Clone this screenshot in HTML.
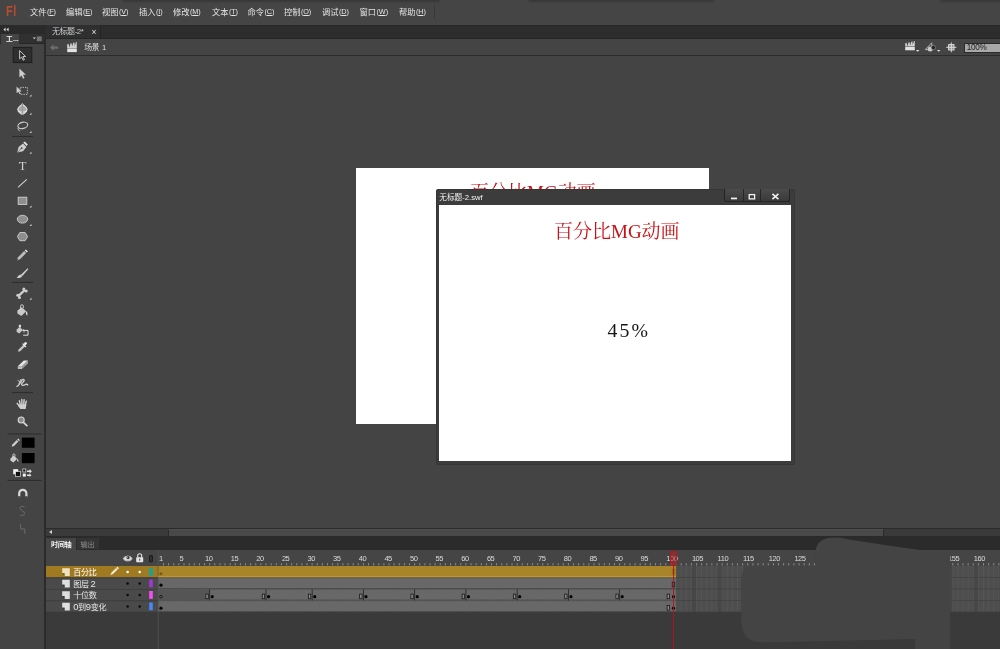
<!DOCTYPE html>
<html lang="zh-CN">
<head>
<meta charset="utf-8">
<title>无标题-2</title>
<style>
*{box-sizing:border-box;margin:0;padding:0}
html,body{width:1000px;height:649px;overflow:hidden;background:#444444}
body{position:relative;font-family:"Liberation Sans","Noto Sans CJK SC",sans-serif;color:#dcdcdc;font-size:9px;line-height:1}
.abs{position:absolute}
#app{position:absolute;left:0;top:0;width:1000px;height:649px;overflow:hidden;will-change:transform}
/* ---------- menu bar ---------- */
#menubar{left:0;top:0;width:1000px;height:25px;background:#454545}
#menubar .logo{left:5.6px;top:4px;font-size:14.2px;color:#b94a2c;letter-spacing:.6px;font-weight:700;transform:scaleX(.78);transform-origin:0 0}
#menubar .mi{top:7.6px;font-size:8.3px;color:#e4e4e4;white-space:nowrap;letter-spacing:-.15px}
#menubar .mi b{font-weight:400;font-size:7.3px;letter-spacing:-.1px;position:relative;top:-.3px;margin-left:.6px}
#menubar .mi u{text-decoration:underline;text-underline-offset:.8px;text-decoration-thickness:.7px}
#menubar .sep{left:434px;top:5px;width:1px;height:14px;background:#383838}
/* ---------- dark strip + doc tab ---------- */
#strip{left:0;top:25px;width:1000px;height:14px;background:#2d2d2d;border-top:1px solid #272727}
.smg{top:-3px;height:5px;background:#383838;border-radius:3px;filter:blur(.8px)}
#doctab{left:46px;top:25px;width:55px;height:13px;background:#2f2f2f;border-right:1px solid #232323}
#doctab span{position:absolute;left:6px;top:3px;font-size:8px;color:#c8ccd0;white-space:nowrap;letter-spacing:-.45px}
#doctab i{position:absolute;left:45.5px;top:2.6px;font-size:8.5px;color:#e0e0e0;font-style:normal;font-weight:400}
/* ---------- scene bar ---------- */
#strip2{left:46px;top:38px;width:954px;height:1px;background:#262626}
#scenebar{left:46px;top:39px;width:954px;height:17px;background:#444444;border-bottom:1.5px solid #2c2c2c}
#scenebar .txt{left:38.2px;top:5.4px;font-size:8px;color:#dcdcdc;white-space:nowrap;letter-spacing:-.8px}
#scenebar .txt b{font-weight:400;letter-spacing:0;margin-left:3.4px;font-size:7.6px}
#zoombox{left:917.5px;top:3.5px;width:40px;height:10px;background:#a8a8a8;border:1px solid #2a2a2a;border-right:none;color:#1c1c1c;font-size:8.2px;padding:.6px 0 0 2.2px;letter-spacing:-.3px}
/* ---------- tool panel ---------- */
#tools{left:0;top:25px;width:46px;height:624px;background:#444;border-right:2px solid #2b2b2b}
#tools .hdr{left:0;top:0;width:44px;height:8.5px;background:#2a2a2a}
#tools .tabrow{left:0;top:8.5px;width:44px;height:10.5px;background:#303030;border-bottom:1px solid #262626}
#tools .tab{left:1px;top:8.5px;width:18px;height:10.5px;background:#444;color:#f2f2f2;font-size:6.8px;font-weight:700;padding:2.2px 0 0 5px;white-space:nowrap;overflow:hidden;letter-spacing:.1px}
#tools .sepr{left:9px;width:15px;height:1px;background:#2e2e2e}
#tools .sel{left:13px;top:22px;width:19px;height:16px;background:#2e2e2e;border:1px solid #222}
/* ---------- stage ---------- */
#stage{left:356px;top:167.8px;width:352.5px;height:256.4px;background:#fff}
.redtitle{font-family:"Liberation Serif","Noto Serif CJK SC",serif;color:#cc0f14;font-size:19px;white-space:nowrap;line-height:1}
#swf{left:436px;top:189px;width:358.6px;height:275.6px;background:#3c3c3c;border-radius:2.5px;box-shadow:inset 0 0 0 .8px #353535}
#swf .title{left:3.2px;top:5px;font-size:7.7px;color:#f2f2f2;white-space:nowrap;letter-spacing:0;font-weight:400}
#swf .body{left:3px;top:15.6px;width:352.1px;height:256.3px;background:#fff}
#swf .btns{left:288px;top:0;width:66.4px;height:13.4px;background:linear-gradient(#4b4b4b,#3a3a3a);border:1px solid #242424;border-top:none;border-radius:0 0 2.5px 2.5px}
#swf .btns i{position:absolute;top:0;width:1px;height:12.4px;background:#262626}
#pct{left:168.4px;top:116px;font-family:"Liberation Serif",serif;font-size:19.8px;color:#161616;letter-spacing:2.15px;white-space:nowrap}
/* ---------- bottom: scrollbar + timeline ---------- */
#hscroll{left:46px;top:528px;width:954px;height:9px;background:#3a3a3a;border-top:1px solid #2a2a2a;border-bottom:1px solid #2a2a2a}
#hscroll .thumb{left:122px;top:0;width:716px;height:7px;background:#494949;border-left:1px solid #2a2a2a;border-right:1px solid #2a2a2a;border-top:1px solid #505050}
#hscroll .arr{left:3px;top:1px;width:0;height:0;border-top:2.6px solid transparent;border-bottom:2.6px solid transparent;border-right:3.4px solid #d0d0d0}
#tl{left:46px;top:537px;width:954px;height:112px;background:#3a3a3a}
#tl .tabs{left:0;top:0;width:954px;height:13px;background:#2b2b2b}
#tl .tab1{left:0;top:1px;width:30px;height:12px;background:#454545;color:#f0f0f0;font-size:7.2px;font-weight:700;padding:3px 0 0 5px;white-space:nowrap;letter-spacing:-.4px}
#tl .tab2{left:31px;top:1px;width:22px;height:11px;background:#343434;color:#8c8c8c;font-size:7.2px;padding:3px 0 0 3.6px;white-space:nowrap;letter-spacing:-.3px}
#tl .head{left:0;top:13px;width:954px;height:16px;background:#444}
.lrow{left:0;width:112px;height:11.5px;background:#4a4a4a;border-top:1px solid #3c3c3c}
.lrow .nm{position:absolute;left:26px;top:1px;font-size:9.2px;color:#e4e4e4;white-space:nowrap;letter-spacing:-.3px}
.frow{left:112.4px;width:517.6px;height:11.5px;background:#676767}
</style>
</head>
<body>
<div id="app">
<!-- ======== MENU BAR ======== -->
<div id="menubar" class="abs">
  <div class="abs logo">Fl</div>
  <div class="abs mi" style="left:30px">文件<b>(<u>F</u>)</b></div>
  <div class="abs mi" style="left:66px">编辑<b>(<u>E</u>)</b></div>
  <div class="abs mi" style="left:102px">视图<b>(<u>V</u>)</b></div>
  <div class="abs mi" style="left:139px">插入<b>(<u>I</u>)</b></div>
  <div class="abs mi" style="left:173px">修改<b>(<u>M</u>)</b></div>
  <div class="abs mi" style="left:212px">文本<b>(<u>T</u>)</b></div>
  <div class="abs mi" style="left:247.6px">命令<b>(<u>C</u>)</b></div>
  <div class="abs mi" style="left:284px">控制<b>(<u>O</u>)</b></div>
  <div class="abs mi" style="left:322px">调试<b>(<u>D</u>)</b></div>
  <div class="abs mi" style="left:359.6px">窗口<b>(<u>W</u>)</b></div>
  <div class="abs mi" style="left:399px">帮助<b>(<u>H</u>)</b></div>
  <div class="abs sep"></div>
</div>
<div class="abs smg" style="left:122px;width:318px"></div><div class="abs smg" style="left:528px;width:186px"></div><div class="abs smg" style="left:940px;width:70px"></div>
<!-- ======== STRIP / DOC TAB ======== -->
<div id="strip" class="abs"></div>
<div id="doctab" class="abs"><span>无标题-2*</span><i>×</i></div>
<div id="strip2" class="abs"></div>
<!-- ======== SCENE BAR ======== -->
<div id="scenebar" class="abs">
  <svg class="abs" style="left:0;top:0" width="954" height="16" viewBox="46 39 954 16">
    <path d="M50 47.600l3.600-3.400v2.200h4.400v2.400h-4.400v2.200z" fill="#6c6c6c"/>
    <path d="M67.200 48.400h9.600v3.700h-9.600z" fill="#e2e2e2"/><path d="M67.200 44.200l1.300-.4 1 3.600 .9-3.900 1.200-.3 .5 3.400 1.100-3.800 1.300-.3 .2 3.500 1.300-3.900.8-.2v6.100h-9.600z" fill="#cfcfcf"/>
    <path d="M905.200 47h9.600v3.300h-9.600z" fill="#e2e2e2"/><path d="M905.200 43.200l1.300-.4 1 3.400.9-3.700 1.200-.3.500 3.200 1.100-3.600 1.300-.3.200 3.300 1.300-3.700.8-.2v5.700h-9.600z" fill="#cfcfcf"/>
    <path d="M916 50h3.400l-1.700 1.700z" fill="#e6e6e6"/>
    <path d="M925.200 49.600l6.600-6.800v6.800z" fill="none" stroke="#bdbdbd" stroke-width=".9"/><circle cx="930.200" cy="49" r="2.500" fill="#c9c9c9"/><circle cx="933.400" cy="47.600" r="2.200" fill="#262626" stroke="#9a9a9a" stroke-width=".6"/>
    <path d="M937 50h3.400l-1.700 1.700z" fill="#e6e6e6"/>
    <rect x="948.600" y="44.600" width="5.400" height="5.400" fill="#8a8a8a" stroke="#e4e4e4" stroke-width=".9"/><path d="M951.300 42.400v9.800M946.200 47.300h10.200" stroke="#e4e4e4" stroke-width=".9"/>
  </svg>
  <div class="abs txt">场景<b>1</b></div>
  <div id="zoombox" class="abs">100%</div>
</div>
<!-- ======== STAGE ======== -->
<div id="stage" class="abs">
  <div class="abs redtitle" style="left:114px;top:15.2px">百分比MG动画</div>
</div>
<div id="swf" class="abs">
  <div class="abs title">无标题-2.swf</div>
  <div class="abs btns"><i style="left:17.6px"></i><i style="left:35px"></i>
    <svg class="abs" style="left:0;top:0" width="66" height="13" viewBox="724 188.400 66 13"><rect x="730" y="197" width="6" height="1.700" fill="#f4f4f4"/><rect x="748.200" y="194" width="5.400" height="4.300" fill="none" stroke="#f4f4f4" stroke-width="1.300"/><path d="M771.400 193.300l6 5.200M777.400 193.300l-6 5.200" stroke="#f4f4f4" stroke-width="1.500"/></svg>
  </div>
  <div class="abs body">
    <div class="abs redtitle" style="left:115px;top:17.4px">百分比MG动画</div>
    <div id="pct" class="abs">45%</div>
  </div>
</div>
<!-- ======== TOOL PANEL ======== -->
<div id="tools" class="abs">
  <div class="abs hdr"></div>
  <div class="abs tabrow"></div>
  <div class="abs tab">工...</div>
</div>
<!--TOOLS_START-->
<svg class="abs" style="left:0;top:0" width="46" height="649" viewBox="0 0 46 649">
<path d="M5.600 27.600l-2.200 2 2.200 2zM8.600 27.600l-2.200 2 2.200 2z" fill="#d6d6d6"/>
<path d="M32.8 37.6h3l-1.5 1.7z" fill="#d8d8d8"/><rect x="36.8" y="36.4" width="4.9" height="4.8" fill="#757575"/>
<rect x="13.2" y="47.4" width="18.6" height="15.2" fill="#2f2f2f" stroke="#1f1f1f" stroke-width="1"/>
<path d="M19.6 50.6v8.2l2-1.8 1.5 3.2 1.3-.6-1.5-3.1h2.7z" fill="#2a2a2a" stroke="#d6d6d6" stroke-width="0.9" stroke-linejoin="round"/>
<path d="M19.4 68.4v9l2.1-2 1.5 3.3 1.5-.7-1.5-3.2h2.9z" fill="#cdcdcd"/>
<path d="M16.6 86.6v6.6l1.7-1.5 1.1 2.3 1-.5-1.1-2.2h2z" fill="#cfcfcf"/>
<rect x="20.2" y="87.4" width="7.2" height="7" fill="none" stroke="#bdbdbd" stroke-width="1" stroke-dasharray="1.3 1.1"/>
<circle cx="22.400" cy="109.600" r="4.500" fill="#a8a8a8" stroke="#d8d8d8" stroke-width=".9"/><path d="M22.400 103.400l4.800 5.800-4.800 5.800-4.800-5.800z" fill="none" stroke="#e2e2e2" stroke-width=".8"/><path d="M17.800 111c2.400 1.500 6.800 1.500 9.200 0" fill="none" stroke="#f0f0f0" stroke-width=".8"/><path d="M22.400 103.400v11.600" stroke="#8a8a8a" stroke-width=".6"/>
<ellipse cx="22.8" cy="125.4" rx="5" ry="3.1" fill="none" stroke="#cfcfcf" stroke-width="1.1" transform="rotate(-14 22.8 125.4)"/><path d="M18.6 127.6c-1.4 1 .2 2.6 1.2 3.6" fill="none" stroke="#cfcfcf" stroke-width="1"/>
<path d="M31.5 94.6v2h-2z" fill="#dcdcdc"/>
<path d="M31.5 112.7v2h-2z" fill="#dcdcdc"/>
<path d="M31.5 130.9v2h-2z" fill="#dcdcdc"/>
<path d="M31.5 151.70000000000002v2h-2z" fill="#dcdcdc"/>
<path d="M31.5 205.60000000000002v2h-2z" fill="#dcdcdc"/>
<path d="M31.5 223.9v2h-2z" fill="#dcdcdc"/>
<path d="M31.5 297.7v2h-2z" fill="#dcdcdc"/>
<rect x="12" y="135.9" width="21" height="1" fill="#2c2c2c"/>
<rect x="12" y="281.9" width="21" height="1" fill="#2c2c2c"/>
<rect x="12" y="392.1" width="21" height="1" fill="#2c2c2c"/>
<rect x="7.5" y="433.4" width="34.0" height="1" fill="#2c2c2c"/>
<rect x="7.5" y="479.9" width="34.0" height="1" fill="#2c2c2c"/>
<path d="M17.2 152.6l1.4-5.6 4.4-3.4 3.4 3.4-3.4 4.2z" fill="#cdcdcd"/><path d="M23.2 142.6l1.6-1.2 3 3-1.2 1.6z" fill="#e2e2e2"/><circle cx="21.6" cy="148.2" r="0.9" fill="#444"/><path d="M17.4 152.4l3.8-3.8" stroke="#444" stroke-width=".6"/>
<text x="22.6" y="169.8" font-family="'Liberation Serif',serif" font-size="12.5" fill="#d2d2d2" text-anchor="middle">T</text>
<path d="M18 187.4l8.8-8" stroke="#cfcfcf" stroke-width="1.1"/>
<rect x="18.2" y="197.2" width="8.6" height="7.2" fill="#8e8e8e" stroke="#d0d0d0" stroke-width="0.9"/>
<ellipse cx="22.5" cy="219.2" rx="5.2" ry="3.9" fill="#8e8e8e" stroke="#d0d0d0" stroke-width="0.9"/>
<path d="M17.4 236.6l2.5-4.1h5.2l2.5 4.1-2.5 4.1h-5.2z" fill="#8e8e8e" stroke="#d0d0d0" stroke-width="0.9"/>
<path d="M16.8 260.4l1.2-3.2 6.2-6.2 2 2-6.2 6.2z" fill="#bdbdbd"/><path d="M24.8 250.4l1-1 2 2-1 1z" fill="#ededed"/><path d="M16.8 260.4l.6-1.6 1 1z" fill="#555"/>
<path d="M27.6 268.2l.8.7-6 7-1.4-1.2z" fill="#d2d2d2"/><path d="M16.6 277.4c1.6-.4 2.2-2.6 4-2.8l1.6 1.4c-.8 2-3.4 2.4-5.6 1.400z" fill="#d2d2d2"/>
<path d="M18 296.400l6.800-6.400" stroke="#cfcfcf" stroke-width="2.400"/><circle cx="17.800" cy="295.200" r="1.500" fill="#cfcfcf"/><circle cx="19.500" cy="297.500" r="1.500" fill="#cfcfcf"/><circle cx="23.800" cy="289" r="1.500" fill="#cfcfcf"/><circle cx="26.200" cy="291" r="1.500" fill="#cfcfcf"/>
<path d="M17.400 310.600l4.400-3.400 4.400 4-4.800 4.800-4-2.600z" fill="#c9c9c9"/><path d="M20.600 309.400v-3.200a1.400 1.400 0 0 1 2.800 0v2" fill="none" stroke="#d8d8d8" stroke-width=".9"/><path d="M26.200 311.200c1.200.4 1.400 2.400 1 4.600-1-.8-1.600-2.600-1-4.600z" fill="#e6e6e6"/>
<path d="M16.600 329.400l3.200-2.400 3 3-3.600 3.400-2.600-1.600z" fill="#c9c9c9"/><path d="M18.800 327.400v-2.600h2.200v2.600z" fill="#dcdcdc"/><path d="M22.400 330.400h5.600v4.800h-4.800" fill="none" stroke="#e0e0e0" stroke-width="1"/><path d="M23.200 329.200c.8.400 1 1.800.8 3.400" stroke="#e6e6e6" stroke-width=".8" fill="none"/>
<path d="M18 351.800l.6-2.200 5-5 1.600 1.600-5 5z" fill="#c4c4c4"/><path d="M23.400 344l1.600-1.800c.8-.8 2.600 1 1.800 1.800l-1.800 1.600z" fill="#ececec"/><path d="M22.600 343.600l3.400 3.400" stroke="#ececec" stroke-width="1.100"/>
<path d="M17.800 366.200l6-5.600h4.200l-6 5.600z" fill="#e4e4e4"/><path d="M17.800 366.200h4.200v2.800h-4.200z" fill="#bcbcbc"/><path d="M22 366.200l6-5.600v2.800l-6 5.600z" fill="#9c9c9c"/>
<path d="M16.400 386.600c2.600-.6 3.400-3 4.800-5.400 1-1.800 2.600-2.400 3-1 .4 1.600-2.400 2.400-2.600 4-.2 1.600 2.400 1.400 3.400.6 1.200-1 2.400-.6 3 .6" fill="none" stroke="#cfcfcf" stroke-width="1.350"/><path d="M17.600 380.200l4 3M21 379l-2.400 5.400" stroke="#cfcfcf" stroke-width=".9"/>
<path d="M19.400 400.600l1 4.600M21.800 399.400l.2 5.600M24.100 399.700l-.4 5.400M26.300 401.200l-1.200 4.400M17.200 403.300l2.600 3.500" stroke="#d4d4d4" stroke-width="1.400" stroke-linecap="round" fill="none"/><path d="M18.900 404.600h7.600l-.9 4.500h-5.200l-1.800-2.500z" fill="#cfcfcf"/>
<circle cx="21.200" cy="420" r="3" fill="#8a8a8a" stroke="#d6d6d6" stroke-width="1.100"/><path d="M23.400 422.400l4 3.800" stroke="#d6d6d6" stroke-width="1.700"/>
<path d="M11.600 446.800l.8-2.400 4.400-4.400 1.600 1.600-4.400 4.400z" fill="#d0d0d0"/><path d="M17.400 439.400l.8-.8 1.600 1.600-.8.800z" fill="#f2f2f2"/>
<rect x="21.900" y="437.600" width="12.700" height="10.200" fill="#000"/>
<path d="M10.400 458.400l3.400-2.800 3.400 3.200-3.800 3.600-3-2z" fill="#cdcdcd"/><path d="M12.800 457.400v-2.400a1.100 1.100 0 0 1 2.200 0v1.600" fill="none" stroke="#d8d8d8" stroke-width=".8"/><path d="M17.400 458.800c1 .4 1.200 1.800.8 3.400-.8-.6-1.200-2-.8-3.400z" fill="#e6e6e6"/>
<rect x="21.900" y="453" width="12.700" height="10.200" fill="#000"/>
<rect x="13.200" y="469.200" width="5" height="5" fill="#f4f4f4"/><rect x="15.600" y="471.600" width="5" height="5" fill="#111" stroke="#e0e0e0" stroke-width=".7"/>
<rect x="22.800" y="469" width="3" height="3" fill="#111" stroke="#e4e4e4" stroke-width=".7"/><rect x="22.800" y="473.600" width="3" height="3" fill="#f2f2f2"/><path d="M27 470.400h2.600v-1.400l2.200 2.200-2.200 2.200v-1.400h-2.600zM27 474.400h2.600v-1l1.800 1.800-1.800 1.800v-1h-2.600z" fill="#e2e2e2"/>
<path d="M19.200 497v-3.600a3.600 3.600 0 0 1 7.200 0v3.600" fill="none" stroke="#d8d8d8" stroke-width="2.200"/><rect x="18.100" y="496" width="2.200" height="1.800" fill="#555"/><rect x="25.300" y="496" width="2.200" height="1.800" fill="#555"/>
<path d="M24.600 507c-2-1.400-4.600-.6-4.600 1.400 0 2.400 4.600 2.400 4.600 5 0 2-2.800 3-4.800 1.600" fill="none" stroke="#6a6a6a" stroke-width="1"/>
<path d="M20.600 524v5h4.200v5" fill="none" stroke="#6a6a6a" stroke-width="1"/>
</svg>
<!--TOOLS_END-->
<!-- ======== H SCROLL ======== -->
<div id="hscroll" class="abs"><div class="abs arr"></div><div class="abs thumb"></div></div>
<!-- ======== TIMELINE ======== -->
<div id="tl" class="abs">
  <div class="abs tabs"></div>
  <div class="abs tab1">时间轴</div>
  <div class="abs tab2">输出</div>
</div>
<!--TL_START-->
<svg class="abs" style="left:0;top:537px" width="1000" height="112" viewBox="0 537 1000 112" font-family="'Liberation Sans','Noto Sans CJK SC',sans-serif">
<rect x="46" y="550" width="954" height="16" fill="#454545"/>
<rect x="46" y="612" width="954" height="37" fill="#3a3a3a"/>
<rect x="46" y="566" width="112" height="11.5" fill="#a07a20"/>
<path d="M62.2 568.3h7.6v7.8h-5.2v-3h-2.4z" fill="#efe2c0"/>
<path d="M62.4 573.6h2v2.4z" fill="#6b5216"/>
<text x="73.2" y="575.1" font-size="8.1" fill="#ffffff" letter-spacing="-0.35">百分比</text>
<circle cx="127.6" cy="571.9" r="1.25" fill="#ffffff"/><circle cx="139.7" cy="571.9" r="1.25" fill="#ffffff"/>
<rect x="149.2" y="568" width="3.6" height="7.8" fill="#13a39c"/>
<rect x="46" y="577.5" width="112" height="11.5" fill="#4a4a4a"/>
<rect x="46" y="577.5" width="112" height="0.8" fill="#3d3d3d"/>
<path d="M62.2 579.8h7.6v7.8h-5.2v-3h-2.4z" fill="#dedede"/>
<path d="M62.4 585.1h2v2.4z" fill="#333"/>
<text x="73.2" y="586.6" font-size="8.1" fill="#e6e6e6" letter-spacing="-0.35">图层 <tspan font-size="9.400">2</tspan></text>
<circle cx="127.6" cy="583.4" r="1.25" fill="#0a0a0a"/><circle cx="139.7" cy="583.4" r="1.25" fill="#0a0a0a"/>
<rect x="149.2" y="579.5" width="3.6" height="7.8" fill="#a435d6"/>
<rect x="46" y="589" width="112" height="11.5" fill="#4a4a4a"/>
<rect x="46" y="589" width="112" height="0.8" fill="#3d3d3d"/>
<path d="M62.2 591.3h7.6v7.8h-5.2v-3h-2.4z" fill="#dedede"/>
<path d="M62.4 596.6h2v2.4z" fill="#333"/>
<text x="73.2" y="598.1" font-size="8.1" fill="#e6e6e6" letter-spacing="-0.35">十位数</text>
<circle cx="127.6" cy="594.9" r="1.25" fill="#0a0a0a"/><circle cx="139.7" cy="594.9" r="1.25" fill="#0a0a0a"/>
<rect x="149.2" y="591" width="3.6" height="7.8" fill="#f64cf6"/>
<rect x="46" y="600.5" width="112" height="11.5" fill="#4a4a4a"/>
<rect x="46" y="600.5" width="112" height="0.8" fill="#3d3d3d"/>
<path d="M62.2 602.8h7.6v7.8h-5.2v-3h-2.4z" fill="#dedede"/>
<path d="M62.4 608.1h2v2.4z" fill="#333"/>
<text x="73.2" y="609.6" font-size="8.1" fill="#e6e6e6" letter-spacing="-0.35"><tspan font-size="9.400">0</tspan>到<tspan font-size="9.400">9</tspan>变化</text>
<circle cx="127.6" cy="606.4" r="1.25" fill="#0a0a0a"/><circle cx="139.7" cy="606.4" r="1.25" fill="#0a0a0a"/>
<rect x="149.2" y="602.5" width="3.6" height="7.8" fill="#4a86f7"/>
<path d="M110.3 575.2l1.2-2.6 4.6-4.6 1.5 1.5-4.6 4.6z" fill="#f3ead0"/><path d="M116.4 567.6l1-.9 1.5 1.5-.9 1z" fill="#fff"/>
<rect x="46" y="611.6" width="112" height="0.8" fill="#3d3d3d"/>
<path d="M123.4 558.6c1.900-3.300 6.700-3.300 8.600 0c-1.900 3-6.700 3-8.600 0z" fill="#e9e9e9" stroke="#bcbcbc" stroke-width="1.100"/><circle cx="128" cy="557.700" r="1.600" fill="#3a3a3a"/><circle cx="127.400" cy="557.200" r=".5" fill="#e0e0e0"/>
<rect x="136.2" y="557.2" width="7" height="5" rx=".6" fill="#e6e6e6"/><path d="M137.7 557.4v-1.6a2 2 0 0 1 4 0v1.6" fill="none" stroke="#e6e6e6" stroke-width="1.1"/><rect x="139.2" y="558.7" width="1" height="2" fill="#444"/>
<rect x="149.6" y="555.6" width="2.8" height="6.2" rx=".5" fill="#333" stroke="#151515" stroke-width=".9"/>
<rect x="157.8" y="550" width="0.7" height="99" fill="#585858"/>
<text x="159.0" y="561" font-size="7.5" fill="#dcdcdc" letter-spacing="-0.45">1</text>
<text x="179.4" y="561" font-size="7.5" fill="#dcdcdc" letter-spacing="-0.45">5</text>
<text x="205.0" y="561" font-size="7.5" fill="#dcdcdc" letter-spacing="-0.45">10</text>
<text x="230.7" y="561" font-size="7.5" fill="#dcdcdc" letter-spacing="-0.45">15</text>
<text x="256.3" y="561" font-size="7.5" fill="#dcdcdc" letter-spacing="-0.45">20</text>
<text x="281.9" y="561" font-size="7.5" fill="#dcdcdc" letter-spacing="-0.45">25</text>
<text x="307.5" y="561" font-size="7.5" fill="#dcdcdc" letter-spacing="-0.45">30</text>
<text x="333.1" y="561" font-size="7.5" fill="#dcdcdc" letter-spacing="-0.45">35</text>
<text x="358.8" y="561" font-size="7.5" fill="#dcdcdc" letter-spacing="-0.45">40</text>
<text x="384.4" y="561" font-size="7.5" fill="#dcdcdc" letter-spacing="-0.45">45</text>
<text x="410.0" y="561" font-size="7.5" fill="#dcdcdc" letter-spacing="-0.45">50</text>
<text x="435.6" y="561" font-size="7.5" fill="#dcdcdc" letter-spacing="-0.45">55</text>
<text x="461.3" y="561" font-size="7.5" fill="#dcdcdc" letter-spacing="-0.45">60</text>
<text x="486.9" y="561" font-size="7.5" fill="#dcdcdc" letter-spacing="-0.45">65</text>
<text x="512.5" y="561" font-size="7.5" fill="#dcdcdc" letter-spacing="-0.45">70</text>
<text x="538.1" y="561" font-size="7.5" fill="#dcdcdc" letter-spacing="-0.45">75</text>
<text x="563.8" y="561" font-size="7.5" fill="#dcdcdc" letter-spacing="-0.45">80</text>
<text x="589.4" y="561" font-size="7.5" fill="#dcdcdc" letter-spacing="-0.45">85</text>
<text x="615.0" y="561" font-size="7.5" fill="#dcdcdc" letter-spacing="-0.45">90</text>
<text x="640.6" y="561" font-size="7.5" fill="#dcdcdc" letter-spacing="-0.45">95</text>
<text x="666.3" y="561" font-size="7.5" fill="#dcdcdc" letter-spacing="-0.45">100</text>
<text x="691.9" y="561" font-size="7.5" fill="#dcdcdc" letter-spacing="-0.45">105</text>
<text x="717.5" y="561" font-size="7.5" fill="#dcdcdc" letter-spacing="-0.45">110</text>
<text x="743.1" y="561" font-size="7.5" fill="#dcdcdc" letter-spacing="-0.45">115</text>
<text x="768.8" y="561" font-size="7.5" fill="#dcdcdc" letter-spacing="-0.45">120</text>
<text x="794.4" y="561" font-size="7.5" fill="#dcdcdc" letter-spacing="-0.45">125</text>
<text x="948.1" y="561" font-size="7.5" fill="#dcdcdc" letter-spacing="-0.45">155</text>
<text x="973.8" y="561" font-size="7.5" fill="#dcdcdc" letter-spacing="-0.45">160</text>
<text x="999.4" y="561" font-size="7.5" fill="#dcdcdc" letter-spacing="-0.45">165</text>
<path d="M163.53 563.2v2.2 M168.65 563.2v2.2 M173.78 563.2v2.2 M178.90 563.2v2.2 M184.03 563.2v2.2 M189.15 563.2v2.2 M194.28 563.2v2.2 M199.40 563.2v2.2 M204.53 563.2v2.2 M209.65 563.2v2.2 M214.78 563.2v2.2 M219.90 563.2v2.2 M225.03 563.2v2.2 M230.15 563.2v2.2 M235.28 563.2v2.2 M240.40 563.2v2.2 M245.53 563.2v2.2 M250.65 563.2v2.2 M255.78 563.2v2.2 M260.90 563.2v2.2 M266.02 563.2v2.2 M271.15 563.2v2.2 M276.27 563.2v2.2 M281.40 563.2v2.2 M286.52 563.2v2.2 M291.65 563.2v2.2 M296.77 563.2v2.2 M301.90 563.2v2.2 M307.02 563.2v2.2 M312.15 563.2v2.2 M317.27 563.2v2.2 M322.40 563.2v2.2 M327.52 563.2v2.2 M332.65 563.2v2.2 M337.77 563.2v2.2 M342.90 563.2v2.2 M348.02 563.2v2.2 M353.15 563.2v2.2 M358.27 563.2v2.2 M363.40 563.2v2.2 M368.52 563.2v2.2 M373.65 563.2v2.2 M378.77 563.2v2.2 M383.90 563.2v2.2 M389.02 563.2v2.2 M394.15 563.2v2.2 M399.27 563.2v2.2 M404.40 563.2v2.2 M409.52 563.2v2.2 M414.65 563.2v2.2 M419.77 563.2v2.2 M424.90 563.2v2.2 M430.02 563.2v2.2 M435.15 563.2v2.2 M440.27 563.2v2.2 M445.40 563.2v2.2 M450.52 563.2v2.2 M455.65 563.2v2.2 M460.77 563.2v2.2 M465.90 563.2v2.2 M471.02 563.2v2.2 M476.15 563.2v2.2 M481.27 563.2v2.2 M486.40 563.2v2.2 M491.52 563.2v2.2 M496.65 563.2v2.2 M501.77 563.2v2.2 M506.90 563.2v2.2 M512.02 563.2v2.2 M517.15 563.2v2.2 M522.27 563.2v2.2 M527.40 563.2v2.2 M532.52 563.2v2.2 M537.65 563.2v2.2 M542.77 563.2v2.2 M547.90 563.2v2.2 M553.02 563.2v2.2 M558.15 563.2v2.2 M563.27 563.2v2.2 M568.40 563.2v2.2 M573.52 563.2v2.2 M578.65 563.2v2.2 M583.77 563.2v2.2 M588.90 563.2v2.2 M594.02 563.2v2.2 M599.15 563.2v2.2 M604.27 563.2v2.2 M609.40 563.2v2.2 M614.52 563.2v2.2 M619.65 563.2v2.2 M624.77 563.2v2.2 M629.90 563.2v2.2 M635.02 563.2v2.2 M640.15 563.2v2.2 M645.27 563.2v2.2 M650.40 563.2v2.2 M655.52 563.2v2.2 M660.65 563.2v2.2 M665.77 563.2v2.2 M670.90 563.2v2.2 M676.02 563.2v2.2 M681.15 563.2v2.2 M686.27 563.2v2.2 M691.40 563.2v2.2 M696.52 563.2v2.2 M701.65 563.2v2.2 M706.77 563.2v2.2 M711.90 563.2v2.2 M717.02 563.2v2.2 M722.15 563.2v2.2 M727.27 563.2v2.2 M732.40 563.2v2.2 M737.52 563.2v2.2 M742.65 563.2v2.2 M747.77 563.2v2.2 M752.90 563.2v2.2 M758.02 563.2v2.2 M763.15 563.2v2.2 M768.27 563.2v2.2 M773.40 563.2v2.2 M778.52 563.2v2.2 M783.65 563.2v2.2 M788.77 563.2v2.2 M793.90 563.2v2.2 M799.02 563.2v2.2 M804.15 563.2v2.2 M809.27 563.2v2.2 M814.40 563.2v2.2 M819.52 563.2v2.2 M824.65 563.2v2.2 M829.77 563.2v2.2 M834.90 563.2v2.2 M840.02 563.2v2.2 M845.15 563.2v2.2 M850.27 563.2v2.2 M855.40 563.2v2.2 M860.52 563.2v2.2 M865.65 563.2v2.2 M870.77 563.2v2.2 M875.90 563.2v2.2 M881.02 563.2v2.2 M886.15 563.2v2.2 M891.27 563.2v2.2 M896.40 563.2v2.2 M901.52 563.2v2.2 M906.65 563.2v2.2 M911.77 563.2v2.2 M916.90 563.2v2.2 M922.02 563.2v2.2 M927.15 563.2v2.2 M932.27 563.2v2.2 M937.40 563.2v2.2 M942.52 563.2v2.2 M947.65 563.2v2.2 M952.77 563.2v2.2 M957.90 563.2v2.2 M963.02 563.2v2.2 M968.15 563.2v2.2 M973.27 563.2v2.2 M978.40 563.2v2.2 M983.52 563.2v2.2 M988.65 563.2v2.2 M993.77 563.2v2.2 M998.90 563.2v2.2 M1004.02 563.2v2.2" stroke="#959595" stroke-width="0.9" fill="none"/>
<rect x="676.02" y="566" width="323.98" height="46" fill="#4e4e4e"/>
<rect x="691.40" y="566" width="5.125" height="46" fill="#474747"/>
<rect x="717.02" y="566" width="5.125" height="46" fill="#474747"/>
<rect x="742.65" y="566" width="5.125" height="46" fill="#474747"/>
<rect x="768.27" y="566" width="5.125" height="46" fill="#474747"/>
<rect x="793.90" y="566" width="5.125" height="46" fill="#474747"/>
<rect x="819.52" y="566" width="5.125" height="46" fill="#474747"/>
<rect x="845.15" y="566" width="5.125" height="46" fill="#474747"/>
<rect x="870.77" y="566" width="5.125" height="46" fill="#474747"/>
<rect x="896.40" y="566" width="5.125" height="46" fill="#474747"/>
<rect x="922.02" y="566" width="5.125" height="46" fill="#474747"/>
<rect x="947.65" y="566" width="5.125" height="46" fill="#474747"/>
<rect x="973.27" y="566" width="5.125" height="46" fill="#474747"/>
<rect x="998.90" y="566" width="5.125" height="46" fill="#474747"/>
<path d="M676.02 566v46 M681.15 566v46 M686.27 566v46 M691.40 566v46 M696.52 566v46 M701.65 566v46 M706.77 566v46 M711.90 566v46 M717.02 566v46 M722.15 566v46 M727.27 566v46 M732.40 566v46 M737.52 566v46 M742.65 566v46 M747.77 566v46 M752.90 566v46 M758.02 566v46 M763.15 566v46 M768.27 566v46 M773.40 566v46 M778.52 566v46 M783.65 566v46 M788.77 566v46 M793.90 566v46 M799.02 566v46 M804.15 566v46 M809.27 566v46 M814.40 566v46 M819.52 566v46 M824.65 566v46 M829.77 566v46 M834.90 566v46 M840.02 566v46 M845.15 566v46 M850.27 566v46 M855.40 566v46 M860.52 566v46 M865.65 566v46 M870.77 566v46 M875.90 566v46 M881.02 566v46 M886.15 566v46 M891.27 566v46 M896.40 566v46 M901.52 566v46 M906.65 566v46 M911.77 566v46 M916.90 566v46 M922.02 566v46 M927.15 566v46 M932.27 566v46 M937.40 566v46 M942.52 566v46 M947.65 566v46 M952.77 566v46 M957.90 566v46 M963.02 566v46 M968.15 566v46 M973.27 566v46 M978.40 566v46 M983.52 566v46 M988.65 566v46 M993.77 566v46 M998.90 566v46" stroke="#595959" stroke-width="0.7" fill="none"/>
<rect x="676.02" y="577.1" width="323.98" height="0.8" fill="#424242"/>
<rect x="676.02" y="588.6" width="323.98" height="0.8" fill="#424242"/>
<rect x="676.02" y="600.1" width="323.98" height="0.8" fill="#424242"/>
<rect x="676.02" y="611.6" width="323.98" height="0.8" fill="#424242"/>
<rect x="158.4" y="566" width="517.62" height="11.5" fill="#a98529"/>
<rect x="158.4" y="576.3" width="517.62" height="1.2" fill="#d19e26"/>
<rect x="158.4" y="577.5" width="517.62" height="11.5" fill="#686868"/>
<rect x="158.4" y="588.2" width="517.62" height="0.9" fill="#474747"/>
<rect x="158.4" y="577.5" width="517.62" height="0.7" fill="#555"/>
<rect x="158.4" y="589" width="517.62" height="11.5" fill="#686868"/>
<rect x="158.4" y="599.7" width="517.62" height="0.9" fill="#474747"/>
<rect x="158.4" y="589" width="517.62" height="0.7" fill="#555"/>
<rect x="158.4" y="600.5" width="517.62" height="11.5" fill="#686868"/>
<rect x="158.4" y="611.2" width="517.62" height="0.9" fill="#474747"/>
<rect x="158.4" y="600.5" width="517.62" height="0.7" fill="#555"/>
<rect x="158.4" y="589.6" width="51.25" height="10.3" fill="#555555"/>
<path d="M163.53 588.1v1.4 M163.53 599.6v1.4 M163.53 611.1v1.4 M168.65 588.1v1.4 M168.65 599.6v1.4 M168.65 611.1v1.4 M173.78 588.1v1.4 M173.78 599.6v1.4 M173.78 611.1v1.4 M178.90 588.1v1.4 M178.90 599.6v1.4 M178.90 611.1v1.4 M184.03 588.1v1.4 M184.03 599.6v1.4 M184.03 611.1v1.4 M189.15 588.1v1.4 M189.15 599.6v1.4 M189.15 611.1v1.4 M194.28 588.1v1.4 M194.28 599.6v1.4 M194.28 611.1v1.4 M199.40 588.1v1.4 M199.40 599.6v1.4 M199.40 611.1v1.4 M204.53 588.1v1.4 M204.53 599.6v1.4 M204.53 611.1v1.4 M209.65 588.1v1.4 M209.65 599.6v1.4 M209.65 611.1v1.4 M214.78 588.1v1.4 M214.78 599.6v1.4 M214.78 611.1v1.4 M219.90 588.1v1.4 M219.90 599.6v1.4 M219.90 611.1v1.4 M225.03 588.1v1.4 M225.03 599.6v1.4 M225.03 611.1v1.4 M230.15 588.1v1.4 M230.15 599.6v1.4 M230.15 611.1v1.4 M235.28 588.1v1.4 M235.28 599.6v1.4 M235.28 611.1v1.4 M240.40 588.1v1.4 M240.40 599.6v1.4 M240.40 611.1v1.4 M245.53 588.1v1.4 M245.53 599.6v1.4 M245.53 611.1v1.4 M250.65 588.1v1.4 M250.65 599.6v1.4 M250.65 611.1v1.4 M255.78 588.1v1.4 M255.78 599.6v1.4 M255.78 611.1v1.4 M260.90 588.1v1.4 M260.90 599.6v1.4 M260.90 611.1v1.4 M266.02 588.1v1.4 M266.02 599.6v1.4 M266.02 611.1v1.4 M271.15 588.1v1.4 M271.15 599.6v1.4 M271.15 611.1v1.4 M276.27 588.1v1.4 M276.27 599.6v1.4 M276.27 611.1v1.4 M281.40 588.1v1.4 M281.40 599.6v1.4 M281.40 611.1v1.4 M286.52 588.1v1.4 M286.52 599.6v1.4 M286.52 611.1v1.4 M291.65 588.1v1.4 M291.65 599.6v1.4 M291.65 611.1v1.4 M296.77 588.1v1.4 M296.77 599.6v1.4 M296.77 611.1v1.4 M301.90 588.1v1.4 M301.90 599.6v1.4 M301.90 611.1v1.4 M307.02 588.1v1.4 M307.02 599.6v1.4 M307.02 611.1v1.4 M312.15 588.1v1.4 M312.15 599.6v1.4 M312.15 611.1v1.4 M317.27 588.1v1.4 M317.27 599.6v1.4 M317.27 611.1v1.4 M322.40 588.1v1.4 M322.40 599.6v1.4 M322.40 611.1v1.4 M327.52 588.1v1.4 M327.52 599.6v1.4 M327.52 611.1v1.4 M332.65 588.1v1.4 M332.65 599.6v1.4 M332.65 611.1v1.4 M337.77 588.1v1.4 M337.77 599.6v1.4 M337.77 611.1v1.4 M342.90 588.1v1.4 M342.90 599.6v1.4 M342.90 611.1v1.4 M348.02 588.1v1.4 M348.02 599.6v1.4 M348.02 611.1v1.4 M353.15 588.1v1.4 M353.15 599.6v1.4 M353.15 611.1v1.4 M358.27 588.1v1.4 M358.27 599.6v1.4 M358.27 611.1v1.4 M363.40 588.1v1.4 M363.40 599.6v1.4 M363.40 611.1v1.4 M368.52 588.1v1.4 M368.52 599.6v1.4 M368.52 611.1v1.4 M373.65 588.1v1.4 M373.65 599.6v1.4 M373.65 611.1v1.4 M378.77 588.1v1.4 M378.77 599.6v1.4 M378.77 611.1v1.4 M383.90 588.1v1.4 M383.90 599.6v1.4 M383.90 611.1v1.4 M389.02 588.1v1.4 M389.02 599.6v1.4 M389.02 611.1v1.4 M394.15 588.1v1.4 M394.15 599.6v1.4 M394.15 611.1v1.4 M399.27 588.1v1.4 M399.27 599.6v1.4 M399.27 611.1v1.4 M404.40 588.1v1.4 M404.40 599.6v1.4 M404.40 611.1v1.4 M409.52 588.1v1.4 M409.52 599.6v1.4 M409.52 611.1v1.4 M414.65 588.1v1.4 M414.65 599.6v1.4 M414.65 611.1v1.4 M419.77 588.1v1.4 M419.77 599.6v1.4 M419.77 611.1v1.4 M424.90 588.1v1.4 M424.90 599.6v1.4 M424.90 611.1v1.4 M430.02 588.1v1.4 M430.02 599.6v1.4 M430.02 611.1v1.4 M435.15 588.1v1.4 M435.15 599.6v1.4 M435.15 611.1v1.4 M440.27 588.1v1.4 M440.27 599.6v1.4 M440.27 611.1v1.4 M445.40 588.1v1.4 M445.40 599.6v1.4 M445.40 611.1v1.4 M450.52 588.1v1.4 M450.52 599.6v1.4 M450.52 611.1v1.4 M455.65 588.1v1.4 M455.65 599.6v1.4 M455.65 611.1v1.4 M460.77 588.1v1.4 M460.77 599.6v1.4 M460.77 611.1v1.4 M465.90 588.1v1.4 M465.90 599.6v1.4 M465.90 611.1v1.4 M471.02 588.1v1.4 M471.02 599.6v1.4 M471.02 611.1v1.4 M476.15 588.1v1.4 M476.15 599.6v1.4 M476.15 611.1v1.4 M481.27 588.1v1.4 M481.27 599.6v1.4 M481.27 611.1v1.4 M486.40 588.1v1.4 M486.40 599.6v1.4 M486.40 611.1v1.4 M491.52 588.1v1.4 M491.52 599.6v1.4 M491.52 611.1v1.4 M496.65 588.1v1.4 M496.65 599.6v1.4 M496.65 611.1v1.4 M501.77 588.1v1.4 M501.77 599.6v1.4 M501.77 611.1v1.4 M506.90 588.1v1.4 M506.90 599.6v1.4 M506.90 611.1v1.4 M512.02 588.1v1.4 M512.02 599.6v1.4 M512.02 611.1v1.4 M517.15 588.1v1.4 M517.15 599.6v1.4 M517.15 611.1v1.4 M522.27 588.1v1.4 M522.27 599.6v1.4 M522.27 611.1v1.4 M527.40 588.1v1.4 M527.40 599.6v1.4 M527.40 611.1v1.4 M532.52 588.1v1.4 M532.52 599.6v1.4 M532.52 611.1v1.4 M537.65 588.1v1.4 M537.65 599.6v1.4 M537.65 611.1v1.4 M542.77 588.1v1.4 M542.77 599.6v1.4 M542.77 611.1v1.4 M547.90 588.1v1.4 M547.90 599.6v1.4 M547.90 611.1v1.4 M553.02 588.1v1.4 M553.02 599.6v1.4 M553.02 611.1v1.4 M558.15 588.1v1.4 M558.15 599.6v1.4 M558.15 611.1v1.4 M563.27 588.1v1.4 M563.27 599.6v1.4 M563.27 611.1v1.4 M568.40 588.1v1.4 M568.40 599.6v1.4 M568.40 611.1v1.4 M573.52 588.1v1.4 M573.52 599.6v1.4 M573.52 611.1v1.4 M578.65 588.1v1.4 M578.65 599.6v1.4 M578.65 611.1v1.4 M583.77 588.1v1.4 M583.77 599.6v1.4 M583.77 611.1v1.4 M588.90 588.1v1.4 M588.90 599.6v1.4 M588.90 611.1v1.4 M594.02 588.1v1.4 M594.02 599.6v1.4 M594.02 611.1v1.4 M599.15 588.1v1.4 M599.15 599.6v1.4 M599.15 611.1v1.4 M604.27 588.1v1.4 M604.27 599.6v1.4 M604.27 611.1v1.4 M609.40 588.1v1.4 M609.40 599.6v1.4 M609.40 611.1v1.4 M614.52 588.1v1.4 M614.52 599.6v1.4 M614.52 611.1v1.4 M619.65 588.1v1.4 M619.65 599.6v1.4 M619.65 611.1v1.4 M624.77 588.1v1.4 M624.77 599.6v1.4 M624.77 611.1v1.4 M629.90 588.1v1.4 M629.90 599.6v1.4 M629.90 611.1v1.4 M635.02 588.1v1.4 M635.02 599.6v1.4 M635.02 611.1v1.4 M640.15 588.1v1.4 M640.15 599.6v1.4 M640.15 611.1v1.4 M645.27 588.1v1.4 M645.27 599.6v1.4 M645.27 611.1v1.4 M650.40 588.1v1.4 M650.40 599.6v1.4 M650.40 611.1v1.4 M655.52 588.1v1.4 M655.52 599.6v1.4 M655.52 611.1v1.4 M660.65 588.1v1.4 M660.65 599.6v1.4 M660.65 611.1v1.4 M665.77 588.1v1.4 M665.77 599.6v1.4 M665.77 611.1v1.4 M670.90 588.1v1.4 M670.90 599.6v1.4 M670.90 611.1v1.4" stroke="#4f4f4f" stroke-width="0.8" fill="none"/>
<circle cx="160.96" cy="573.7" r="1.55" fill="#7a5c12"/>
<circle cx="160.96" cy="585.2" r="1.6" fill="#050505"/>
<circle cx="160.96" cy="608.2" r="1.6" fill="#050505"/>
<circle cx="160.96" cy="596.7" r="1.35" fill="none" stroke="#111" stroke-width="0.75"/>
<rect x="205.89" y="594.1" width="2.4" height="4.6" fill="#8a8a8a" stroke="#1a1a1a" stroke-width="0.8"/>
<circle cx="212.21" cy="596.7" r="1.6" fill="#050505"/>
<rect x="209.25" y="589.4" width="0.8" height="11" fill="#222"/>
<rect x="262.26" y="594.1" width="2.4" height="4.6" fill="#8a8a8a" stroke="#1a1a1a" stroke-width="0.8"/>
<circle cx="268.59" cy="596.7" r="1.6" fill="#050505"/>
<rect x="265.62" y="589.4" width="0.8" height="11" fill="#222"/>
<rect x="308.39" y="594.1" width="2.4" height="4.6" fill="#8a8a8a" stroke="#1a1a1a" stroke-width="0.8"/>
<circle cx="314.71" cy="596.7" r="1.6" fill="#050505"/>
<rect x="311.75" y="589.4" width="0.8" height="11" fill="#222"/>
<rect x="359.64" y="594.1" width="2.4" height="4.6" fill="#8a8a8a" stroke="#1a1a1a" stroke-width="0.8"/>
<circle cx="365.96" cy="596.7" r="1.6" fill="#050505"/>
<rect x="363.00" y="589.4" width="0.8" height="11" fill="#222"/>
<rect x="410.89" y="594.1" width="2.4" height="4.6" fill="#8a8a8a" stroke="#1a1a1a" stroke-width="0.8"/>
<circle cx="417.21" cy="596.7" r="1.6" fill="#050505"/>
<rect x="414.25" y="589.4" width="0.8" height="11" fill="#222"/>
<rect x="462.14" y="594.1" width="2.4" height="4.6" fill="#8a8a8a" stroke="#1a1a1a" stroke-width="0.8"/>
<circle cx="468.46" cy="596.7" r="1.6" fill="#050505"/>
<rect x="465.50" y="589.4" width="0.8" height="11" fill="#222"/>
<rect x="513.39" y="594.1" width="2.4" height="4.6" fill="#8a8a8a" stroke="#1a1a1a" stroke-width="0.8"/>
<circle cx="519.71" cy="596.7" r="1.6" fill="#050505"/>
<rect x="516.75" y="589.4" width="0.8" height="11" fill="#222"/>
<rect x="564.64" y="594.1" width="2.4" height="4.6" fill="#8a8a8a" stroke="#1a1a1a" stroke-width="0.8"/>
<circle cx="570.96" cy="596.7" r="1.6" fill="#050505"/>
<rect x="568.00" y="589.4" width="0.8" height="11" fill="#222"/>
<rect x="615.89" y="594.1" width="2.4" height="4.6" fill="#8a8a8a" stroke="#1a1a1a" stroke-width="0.8"/>
<circle cx="622.21" cy="596.7" r="1.6" fill="#050505"/>
<rect x="619.25" y="589.4" width="0.8" height="11" fill="#222"/>
<rect x="667.14" y="594.1" width="2.4" height="4.6" fill="#8a8a8a" stroke="#1a1a1a" stroke-width="0.8"/>
<circle cx="673.46" cy="596.7" r="1.6" fill="#050505"/>
<rect x="667.14" y="605.6" width="2.4" height="4.6" fill="#8a8a8a" stroke="#1a1a1a" stroke-width="0.8"/>
<circle cx="673.46" cy="608.2" r="1.6" fill="#050505"/>
<rect x="672.26" y="582.2" width="2.4" height="4.6" fill="#8a8a8a" stroke="#1a1a1a" stroke-width="0.8"/>
<rect x="672.26" y="569.5" width="2.4" height="4.6" fill="none" stroke="#8a6a1a" stroke-width="0.8"/>
<rect x="670.46" y="551.3" width="6" height="14.2" rx="1" fill="#b8202a" fill-opacity=".55" stroke="#b8151c" stroke-width="0.9"/>
<rect x="673.11" y="565" width="0.9" height="84" fill="#b4141a"/>
<path d="M748 566 L815 566 L815.2 551 Q817 541 826 538.5 Q835 536.5 846 539 L888 545.4 L921.6 550.2 L950.3 552.4 L950.3 649 L915 649 L915 639 L762 642.5 Q744 642 741.5 625 L741 586 Q741 568 748 566 Z" fill="#444444"/>
</svg>
<!--TL_END-->
</div>
</body>
</html>
